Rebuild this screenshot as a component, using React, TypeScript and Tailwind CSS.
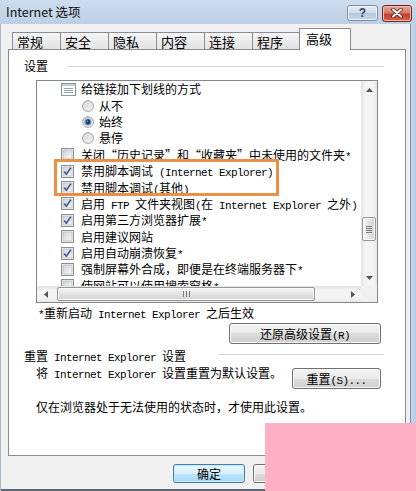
import React from "react";

type RowT = { k: "icon" | "radio" | "check"; c?: boolean; t: string };

const rows: RowT[] = [
  { k: "icon", t: "给链接加下划线的方式" },
  { k: "radio", t: "从不" },
  { k: "radio", c: true, t: "始终" },
  { k: "radio", t: "悬停" },
  { k: "check", t: "关闭“历史记录”和“收藏夹”中未使用的文件夹*" },
  { k: "check", c: true, t: "禁用脚本调试 (Internet Explorer)" },
  { k: "check", c: true, t: "禁用脚本调试(其他)" },
  { k: "check", c: true, t: "启用 FTP 文件夹视图(在 Internet Explorer 之外)" },
  { k: "check", c: true, t: "启用第三方浏览器扩展*" },
  { k: "check", t: "启用建议网站" },
  { k: "check", c: true, t: "启用自动崩溃恢复*" },
  { k: "check", t: "强制屏幕外合成，即便是在终端服务器下*" },
  { k: "check", t: "使网站可以使用搜索窗格*" },
];

function Mixed({ text }: { text: string }) {
  const parts = text.split(/([\x20-\x7e]+)/).filter((p) => p.length > 0);
  return (
    <>
      {parts.map((p, i) =>
        /^[\x20-\x7e]+$/.test(p) ? (
          <span key={i} className="font-['Liberation_Mono',monospace] text-[11px] tracking-[-0.6px] leading-none whitespace-pre">
            {p}
          </span>
        ) : (
          <span key={i}>{p}</span>
        )
      )}
    </>
  );
}

function CheckBox({ checked }: { checked?: boolean }) {
  return (
    <svg width="13" height="13" viewBox="0 0 13 13" className="shrink-0">
      <defs>
        <linearGradient id="cbg" x1="0" y1="0" x2="1" y2="1">
          <stop offset="0" stopColor="#cfd3d8" />
          <stop offset="1" stopColor="#f7f7f7" />
        </linearGradient>
      </defs>
      <rect x="0.5" y="0.5" width="12" height="12" fill="#f5f5f5" stroke="#8e8f8f" />
      <rect x="2" y="2" width="9" height="9" fill="url(#cbg)" stroke="#aeb2b8" strokeWidth="0.6" />
      {checked && (
        <path d="M3.2 6.4 L5.3 9.2 L9.8 2.8" stroke="#4a5f97" strokeWidth="1.7" fill="none" strokeLinejoin="round" />
      )}
    </svg>
  );
}

function Radio({ checked }: { checked?: boolean }) {
  return (
    <svg width="12" height="12" viewBox="0 0 12 12" className="shrink-0">
      <defs>
        <linearGradient id="rbg" x1="0" y1="0" x2="1" y2="1">
          <stop offset="0" stopColor="#d0d3d8" />
          <stop offset="1" stopColor="#f8f8f8" />
        </linearGradient>
      </defs>
      <circle cx="6" cy="6" r="5.4" fill="url(#rbg)" stroke="#9a9c9f" strokeWidth="0.9" />
      {checked && (
        <>
          <circle cx="6" cy="6" r="3.4" fill="#6f93c4" />
          <circle cx="6" cy="6" r="2.4" fill="#1f3f72" />
          <circle cx="5.3" cy="5.2" r="0.8" fill="#8fb2e0" />
        </>
      )}
    </svg>
  );
}

function ListIcon() {
  return (
    <svg width="15" height="13" viewBox="0 0 15 13" className="shrink-0">
      <rect x="0.5" y="0.5" width="14" height="12" fill="#fdfdfd" stroke="#8c97a6" />
      <rect x="1" y="1" width="13" height="2" fill="#c3cedb" />
      <path d="M3 5.5 H12 M3 7.5 H12 M3 9.5 H12" stroke="#98a3b1" strokeWidth="1" />
    </svg>
  );
}

function Row({ r }: { r: RowT }) {
  if (r.k === "radio") {
    return (
      <div className="h-[16.4px] flex items-center pl-[45px] whitespace-nowrap">
        <Radio checked={r.c} />
        <span className="ml-[5px] leading-[16px]">
          <Mixed text={r.t} />
        </span>
      </div>
    );
  }
  return (
    <div className="h-[16.4px] flex items-center pl-[24px] whitespace-nowrap">
      {r.k === "icon" ? <ListIcon /> : <CheckBox checked={r.c} />}
      <span className={r.k === "icon" ? "ml-[5px] leading-[16px]" : "ml-[7px] leading-[16px]"}>
        <Mixed text={r.t} />
      </span>
    </div>
  );
}

function ArrowUp() {
  return (
    <svg width="7" height="4" viewBox="0 0 7 4">
      <path d="M0 4 L3.5 0 L7 4Z" fill="#555" />
    </svg>
  );
}
function ArrowDown() {
  return (
    <svg width="7" height="4" viewBox="0 0 7 4">
      <path d="M0 0 L3.5 4 L7 0Z" fill="#555" />
    </svg>
  );
}
function ArrowLeft() {
  return (
    <svg width="4" height="7" viewBox="0 0 4 7">
      <path d="M4 0 L0 3.5 L4 7Z" fill="#555" />
    </svg>
  );
}
function ArrowRight() {
  return (
    <svg width="4" height="7" viewBox="0 0 4 7">
      <path d="M0 0 L4 3.5 L0 7Z" fill="#555" />
    </svg>
  );
}

function Btn({ children, className = "" }: { children: React.ReactNode; className?: string }) {
  return (
    <div
      className={
        "h-[21px] rounded-[3px] border border-[#707070] bg-[linear-gradient(to_bottom,#f2f2f2_0%,#ebebeb_50%,#dddddd_50%,#cfcfcf_100%)] shadow-[inset_0_0_0_1px_#fbfbfb] flex items-center justify-center text-[12px] whitespace-nowrap " +
        className
      }
    >
      {children}
    </div>
  );
}

const tabs = ["常规", "安全", "隐私", "内容", "连接", "程序"];

export default function App() {
  return (
    <div className="relative w-[416px] h-[491px] overflow-hidden flex flex-col bg-[#f0f0f0] text-black font-['Noto_Sans_CJK_SC','Noto_Sans',sans-serif] text-[12px]">
      {/* title bar */}
      <div className="h-[24px] shrink-0 flex items-center bg-[linear-gradient(to_bottom,#cddcee,#bccfe4)] pl-[6px]">
        <span className="text-[12.5px] text-[#111] leading-none">Internet 选项</span>
        <div className="ml-auto flex items-start gap-[4px] mr-[4px] mt-[2px]">
          <div className="w-[31px] h-[16px] rounded-[3px] border border-[#7d8ea5] bg-[linear-gradient(to_bottom,#e6eef8_0%,#ccdaea_50%,#b3c6dd_51%,#c8d8ea_100%)] shadow-[inset_0_0_0_1px_#eef4fb] flex items-center justify-center">
            <span className="text-[12px] font-bold text-[#33445e] leading-none font-['Liberation_Sans',sans-serif]">?</span>
          </div>
          <div className="w-[30px] h-[17px] rounded-[3px] border border-[#6e2b24] bg-[linear-gradient(to_bottom,#e8a99e_0%,#d8796a_45%,#c4402c_55%,#d4624a_100%)] shadow-[inset_0_0_0_1px_#f0b9ae] flex items-center justify-center">
            <svg width="12" height="10" viewBox="0 0 12 10">
              <path d="M2 1.5 L10 8.5 M10 1.5 L2 8.5" stroke="#5a1f18" strokeWidth="3.6" strokeLinecap="round" />
              <path d="M2 1.5 L10 8.5 M10 1.5 L2 8.5" stroke="#ffffff" strokeWidth="2" strokeLinecap="round" />
            </svg>
          </div>
        </div>
      </div>

      {/* body */}
      <div className="flex-1 flex">
        <div className="w-[411px] flex flex-col border-l border-[#a9b6c6] border-r border-r-[#7f8da0]">
          {/* tabs */}
          <div className="h-[25px] flex items-end pl-[11px]">
            {tabs.map((t, i) => (
              <div
                key={t}
                className={
                  "h-[17px] w-[49px] border border-b-0 border-[#898c95] bg-[linear-gradient(to_bottom,#f5f5f5,#e3e3e3)] flex items-center pl-[4px] text-[13px] leading-none " +
                  (i > 0 ? "-ml-px" : "")
                }
              >
                {t}
              </div>
            ))}
            <div className="relative z-10 -ml-[2px] -mb-px h-[22px] w-[52px] border border-b-0 border-[#898c95] bg-white flex items-start pt-[3px] pl-[6px] text-[13px] leading-none">
              高级
            </div>
          </div>

          {/* panel */}
          <div className="ml-[7px] w-[398px] h-[407px] border border-[#898c95] bg-white">
            <div className="pl-[15px] pr-[21px] pt-[8px] flex flex-col">
              <div className="h-[16px] flex items-center">
                <span className="leading-none">设置</span>
                <div className="flex-1 h-px bg-[#cfd6dc] ml-[20px] mt-[1px]" />
              </div>

              {/* list box */}
              <div className="mt-[6px] ml-[12px] w-[342px] h-[223px] border border-[#828790] grid grid-cols-[324px_16px] grid-rows-[205px_16px]">
                <div className="overflow-hidden bg-white">
                  {rows.map((r, i) => (
                    <Row key={i} r={r} />
                  ))}
                </div>
                <div className="flex flex-col bg-[linear-gradient(to_right,#e2e2e2,#f4f4f4_25%,#f4f4f4_75%,#e6e6e6)]">
                  <div className="h-[17px] flex items-center justify-center">
                    <ArrowUp />
                  </div>
                  <div className="flex-1">
                    <div className="mt-[119px] mx-[1px] h-[24px] rounded-[2px] border border-[#979797] bg-[linear-gradient(to_right,#f6f6f6,#e4e4e4_50%,#d3d3d3)] shadow-[inset_0_0_0_1px_#fafafa] flex flex-col items-center justify-center gap-[1px]">
                      <div className="w-[6px] h-px bg-[#7a7a7a]" />
                      <div className="w-[6px] h-px bg-[#7a7a7a]" />
                      <div className="w-[6px] h-px bg-[#7a7a7a]" />
                      <div className="w-[6px] h-px bg-[#7a7a7a]" />
                    </div>
                  </div>
                  <div className="h-[17px] flex items-center justify-center">
                    <ArrowDown />
                  </div>
                </div>
                <div className="flex items-stretch bg-[linear-gradient(to_bottom,#e2e2e2,#f4f4f4_25%,#f4f4f4_75%,#e6e6e6)]">
                  <div className="w-[17px] flex items-center justify-center">
                    <ArrowLeft />
                  </div>
                  <div className="ml-[3px] my-[1px] w-[258px] rounded-[2px] border border-[#979797] bg-[linear-gradient(to_bottom,#f6f6f6,#e4e4e4_50%,#d3d3d3)] shadow-[inset_0_0_0_1px_#fafafa] flex items-center justify-center gap-[1px]">
                    <div className="w-px h-[6px] bg-[#7a7a7a]" />
                    <div className="w-px h-[6px] bg-[#7a7a7a] ml-[1px]" />
                    <div className="w-px h-[6px] bg-[#7a7a7a] ml-[1px]" />
                  </div>
                  <div className="ml-auto w-[17px] flex items-center justify-center">
                    <ArrowRight />
                  </div>
                </div>
                <div className="bg-[#f0f0f0]" />
              </div>

              <div className="mt-[2px] ml-[14px] h-[16px] flex items-center whitespace-nowrap">
                <span>
                  <Mixed text="*重新启动 Internet Explorer 之后生效" />
                </span>
              </div>

              <div className="mt-[2px] flex justify-end mr-[3px]">
                <Btn className="w-[152px]">
                  <span>
                    <Mixed text="还原高级设置(R)" />
                  </span>
                </Btn>
              </div>

              <div className="mt-[4px] h-[16px] flex items-start whitespace-nowrap">
                <span className="leading-[16px]">
                  <Mixed text="重置 Internet Explorer 设置" />
                </span>
                <div className="flex-1 h-px bg-[#cfd6dc] ml-[32px] mt-[6px]" />
              </div>

              <div className="mt-[1px] flex items-start whitespace-nowrap">
                <span className="ml-[12px] leading-[16px]">
                  <Mixed text="将 Internet Explorer 设置重置为默认设置。" />
                </span>
                <Btn className="ml-auto mt-[3px] mr-[3px] w-[89px]">
                  <span>
                    <Mixed text="重置(S)..." />
                  </span>
                </Btn>
              </div>

              <div className="mt-[10px] ml-[12px] h-[16px] leading-[16px] whitespace-nowrap">
                仅在浏览器处于无法使用的状态时，才使用此设置。
              </div>
            </div>
          </div>

          {/* bottom buttons */}
          <div className="mt-[8px] flex items-start pl-[172px] gap-[8px]">
            <div className="w-[72px] h-[19px] rounded-[3px] border border-[#3c7fb1] bg-[linear-gradient(to_bottom,#eaf6fd_0%,#d9f0fc_50%,#bee6fd_50%,#a7d9f5_100%)] shadow-[inset_0_0_0_1px_#c8ecfd] flex items-center justify-center text-[12px]">
              确定
            </div>
            <Btn className="w-[72px] !h-[19px]">取消</Btn>
          </div>
          <div className="flex-1" />
          <div className="h-[2px] bg-[#5c6773]" />
        </div>
        <div className="flex-1 bg-[linear-gradient(to_right,#c6d7ea,#b7cbe2)]" />
      </div>

      {/* annotation highlight */}
      <div className="absolute left-[54px] top-[159px] w-[225px] h-[37px] border-[3px] border-[#eb8f47]" />
      {/* pink overlay */}
      <div className="absolute left-[265px] top-[423px] right-0 bottom-0 bg-[#feb0c4]" />
    </div>
  );
}
